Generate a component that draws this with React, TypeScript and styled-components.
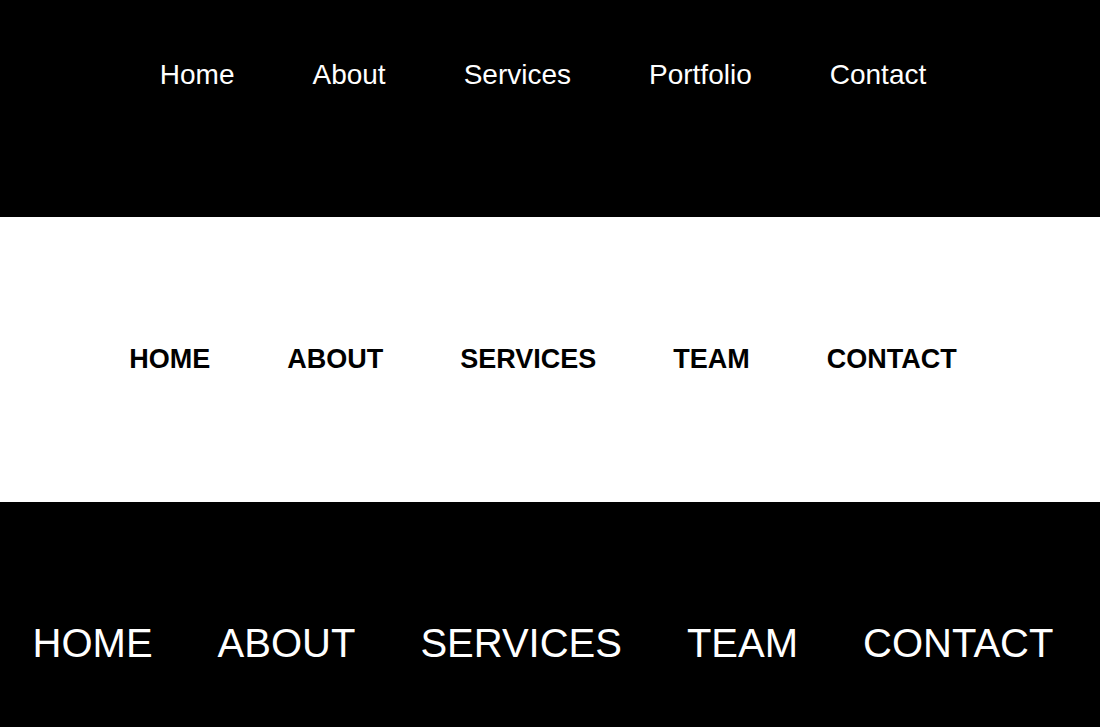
import React from "react";
import styled, { createGlobalStyle } from "styled-components";

const Global = createGlobalStyle`
  html, body { margin: 0; padding: 0; }
  body { font-family: "Liberation Sans", Arial, sans-serif; background: #000; }
  * { box-sizing: border-box; }
`;

type Variant = "plain" | "bold" | "large";

const Band = styled.section<{ $light?: boolean; $h: number; $center?: boolean; $top?: number }>`
  height: ${(p) => p.$h}px;
  background: ${(p) => (p.$light ? "#fff" : "#000")};
  color: ${(p) => (p.$light ? "#000" : "#fff")};
  display: flex;
  align-items: ${(p) => (p.$center ? "center" : "flex-start")};
  padding-top: ${(p) => p.$top ?? 0}px;
`;

const NavBar = styled.nav`
  width: 100%;
`;

const Menu = styled.ul<{ $gap: number }>`
  list-style: none;
  margin: 0;
  padding: 0 14px 0 0;
  width: 100%;
  display: flex;
  justify-content: center;
  gap: ${(p) => p.$gap}px;
`;

const Item = styled.li<{ $v: Variant }>`
  font-size: ${(p) => (p.$v === "large" ? 40 : p.$v === "bold" ? 27 : 28)}px;
  font-weight: ${(p) => (p.$v === "bold" ? 700 : 400)};
  text-transform: ${(p) => (p.$v === "plain" ? "none" : "uppercase")};
  line-height: normal;
  white-space: nowrap;
  cursor: pointer;
`;

const Nav = ({ items, v, gap }: { items: string[]; v: Variant; gap: number }) => (
  <NavBar>
    <Menu $gap={gap}>
      {items.map((t) => (
        <Item key={t} $v={v}>
          {t}
        </Item>
      ))}
    </Menu>
  </NavBar>
);

export default function App() {
  return (
    <>
      <Global />
      <Band $h={217} $top={59}>
        <Nav items={["Home", "About", "Services", "Portfolio", "Contact"]} v="plain" gap={78} />
      </Band>
      <Band $light $h={285} $center>
        <Nav items={["Home", "About", "Services", "Team", "Contact"]} v="bold" gap={77} />
      </Band>
      <Band $h={282} $center>
        <Nav items={["Home", "About", "Services", "Team", "Contact"]} v="large" gap={65} />
      </Band>
    </>
  );
}
